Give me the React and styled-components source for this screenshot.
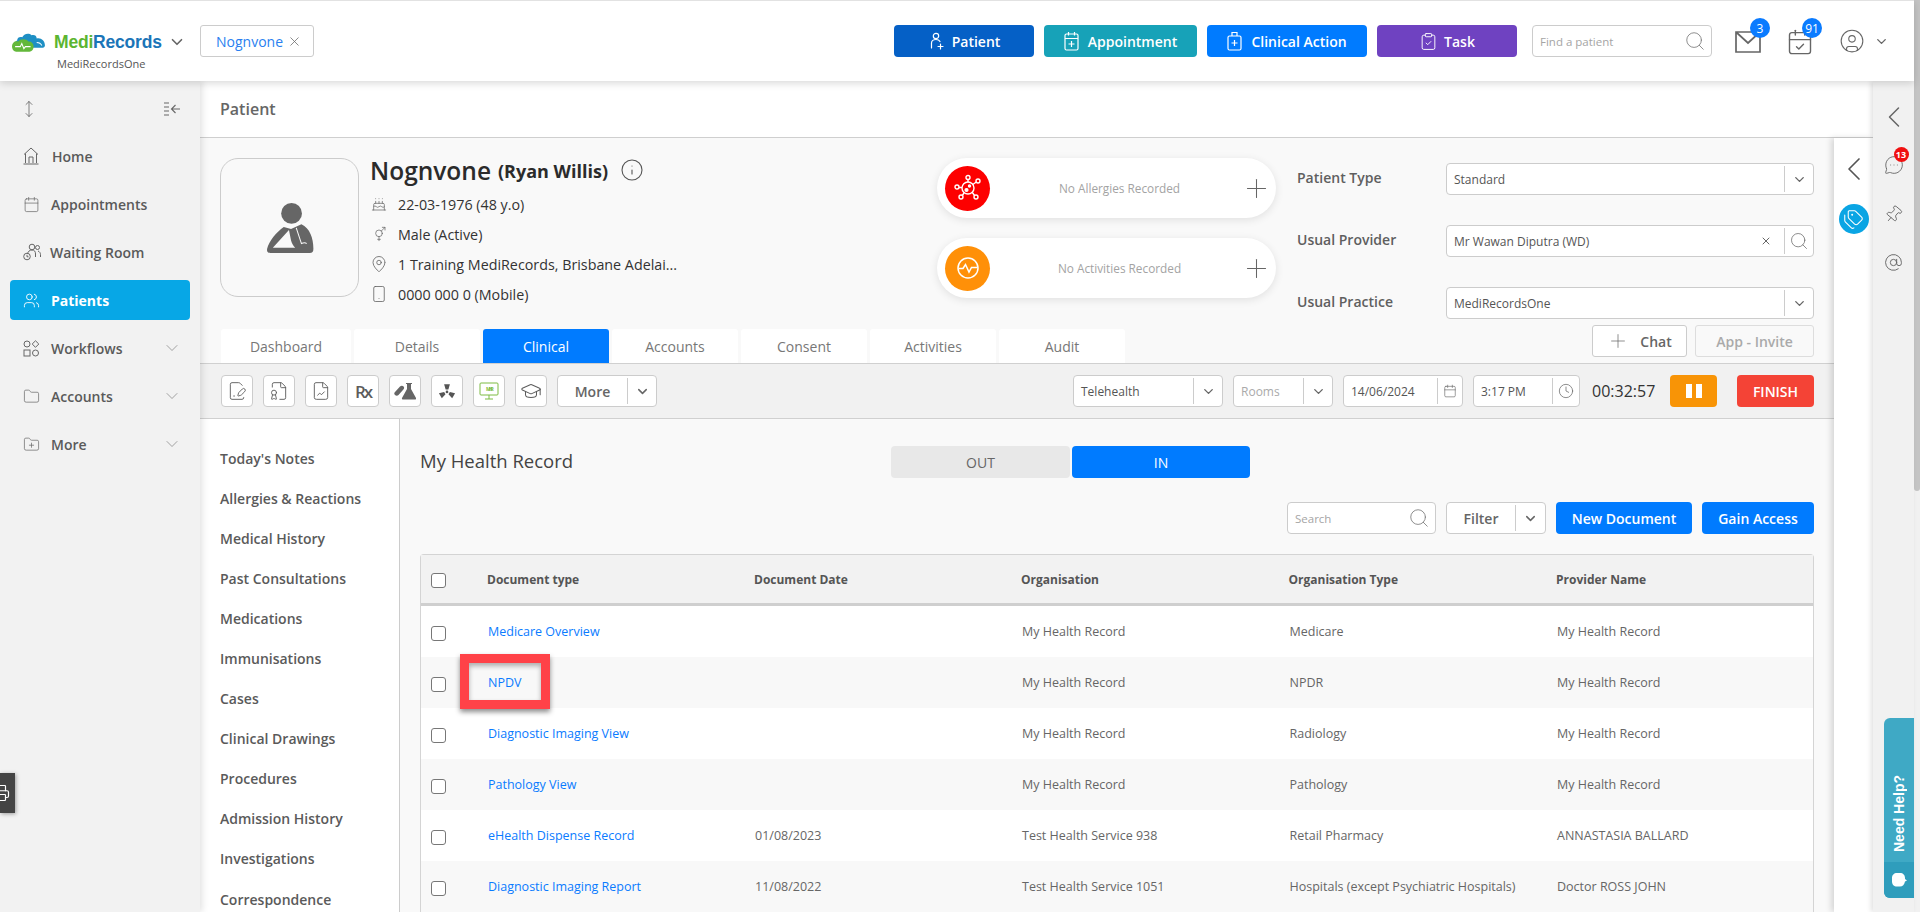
import React from 'react';
import styled, { createGlobalStyle } from 'styled-components';
import {
  ChevronDown, ChevronLeft, Search, X, Plus, Calendar, Clock, Users, Folder, FolderPlus,
  MoveVertical, ClipboardCheck, CalendarCheck, CircleUser, Cake,
  VenusAndMars, MapPin, Smartphone, Info, FilePenLine, FileBadge, FileChartLine,
  GraduationCap, Tags, MessageCircleMore, Pin, AtSign, Printer,
} from 'lucide-react';

const GlobalStyle = createGlobalStyle`
  html, body { margin:0; padding:0; height:100%; overflow:hidden; }
  body { font-family:"Open Sans", "Liberation Sans", sans-serif; color:#555; background:#f2f2f2; }
  * { box-sizing:border-box; }
`;

const Page = styled.div`
  display:flex;
  height:912px;
  width:1920px;
  overflow:hidden;
  position:relative;
`;

const Screen = styled.div`
  width:1914px;
  display:flex;
  flex-direction:column;
  height:100%;
`;

const ScrollTrack = styled.div`
  width:6px;
  background:#f1f1f1;
`;

const ScrollThumb = styled.div`
  height:491px;
  background:#c4c4c4;
  border-radius:0 0 3px 3px;
`;

/* top bar */
const TopBar = styled.header`
  height:81px;
  flex:none;
  background:#fff;
  border-top:1px solid #e2e2e2;
  box-shadow:0 2px 8px rgba(0,0,0,.16);
  display:flex;
  align-items:center;
  position:relative;
  z-index:5;
  padding:0 25px 0 11px;
`;

const Brand = styled.div`
  width:189px;
  flex:none;
  margin-top:19px;
`;

const BrandRow = styled.div`
  display:flex;
  align-items:center;
  height:24px;
  svg.cloud { margin-right:7px; }
`;

const BrandName = styled.span`
  font-family:"Liberation Sans", Arial, sans-serif;
  font-weight:700;
  font-size:17.5px;
  letter-spacing:-.2px;
  color:#1b75b8;
  width:114px;
  b { color:#5cb531; }
`;

const BrandSub = styled.div`
  font-size:11px;
  color:#555;
  padding-left:46px;
  margin-top:3px;
  line-height:14px;
`;

const PatientTag = styled.div`
  width:114px;
  height:32px;
  border:1px solid #ccc;
  border-radius:3px;
  display:flex;
  align-items:center;
  justify-content:space-between;
  padding:0 11px 0 15px;
  font-size:14px;
  color:#2a7ff0;
  svg { color:#666; }
`;

const TopActions = styled.div`
  margin-left:auto;
  display:flex;
  align-items:center;
  gap:10px;
`;

const ActionButton = styled.button`
  height:32px;
  width:${p => p.$w}px;
  border:0;
  border-radius:4px;
  background:${p => p.$bg};
  color:#fff;
  font:600 14px "Open Sans", sans-serif;
  display:flex;
  align-items:center;
  justify-content:center;
  gap:${p => p.$gap || 6}px;
  padding:0;
`;

const SearchBox = styled.div`
  width:${p => p.$w}px;
  height:32px;
  border:1px solid #ccc;
  border-radius:4px;
  background:#fff;
  display:flex;
  align-items:center;
  justify-content:space-between;
  padding:0 5px 0 7px;
  font-size:11.5px;
  color:#a5a5a5;
  margin-left:${p => p.$ml || 0}px;
  svg { color:#777; }
`;

const IconBadge = styled.div`
  position:relative;
  width:26px;
  height:26px;
  color:#666;
  margin-left:${p => p.$ml}px;
  margin-top:4px;
  svg.wide { margin:-2px 0 0 -1px; }
`;

const CountBubble = styled.span`
  position:absolute;
  top:-12px;
  left:15px;
  width:20px;
  height:20px;
  border-radius:50%;
  background:#0a7bff;
  color:#fff;
  font-size:12px;
  font-weight:500;
  display:flex;
  align-items:center;
  justify-content:center;
`;

const UserArea = styled.div`
  display:flex;
  align-items:center;
  gap:9px;
  margin-left:16px;
  color:#666;
`;

/* body */
const Layout = styled.div`
  flex:1;
  display:flex;
  min-height:0;
`;

const Sidebar = styled.aside`
  width:200px;
  flex:none;
  background:#f2f2f2;
  box-shadow:2px 0 7px rgba(0,0,0,.12);
  position:relative;
  z-index:3;
  padding:0 10px;
`;

const SideTools = styled.div`
  height:55px;
  display:flex;
  align-items:center;
  justify-content:space-between;
  color:#666;
  padding:0 9px 0 10px;
`;

const SideItem = styled.div`
  height:40px;
  margin-bottom:8px;
  border-radius:4px;
  display:flex;
  align-items:center;
  gap:${p => p.$gap || 11}px;
  padding:0 8px 0 13px;
  font-size:14px;
  font-weight:${p => (p.$active ? 700 : 600)};
  color:${p => (p.$active ? '#fff' : '#5a5a5a')};
  background:${p => (p.$active ? '#07a7e6' : 'transparent')};
  svg.lead { color:${p => (p.$active ? '#fff' : '#666')}; flex:none; }
  svg.more { margin-left:auto; color:#777; }
`;

const Workspace = styled.div`
  flex:1;
  display:flex;
  flex-direction:column;
  min-width:0;
`;

const PageTitle = styled.div`
  height:57px;
  flex:none;
  background:#fff;
  border-bottom:1px solid #cfcfcf;
  padding:0 20px 1px;
  display:flex;
  align-items:center;
  font-size:16px;
  font-weight:600;
  color:#666;
`;

const WorkRow = styled.div`
  flex:1;
  display:flex;
  min-height:0;
`;

const Content = styled.main`
  flex:1;
  min-width:0;
  display:flex;
  flex-direction:column;
  background:#f9f9f9;
`;

const PatientPanel = styled.section`
  height:225px;
  flex:none;
  display:flex;
  padding:20px 20px 0;
`;

const PatientLeft = styled.div`
  width:1077px;
  flex:none;
  display:flex;
  flex-direction:column;
`;

const PatientTop = styled.div`
  height:140px;
  display:flex;
`;

const Avatar = styled.div`
  width:139px;
  height:139px;
  flex:none;
  border:1px solid #ccc;
  border-radius:18px;
  padding-top:3px;
  display:flex;
  align-items:center;
  justify-content:center;
`;

const Identity = styled.div`
  width:578px;
  flex:none;
  padding-left:11px;
  color:#333;
`;

const NameLine = styled.div`
  height:30px;
  margin:-3px 0 4px;
  display:flex;
  align-items:center;
  font-size:24.5px;
  font-weight:600;
  color:#2b2b2b;
  small {
    font-size:18px;
    font-weight:700;
    margin:2px 0 0 7px;
  }
  svg { margin-left:12px; color:#555; }
`;

const InfoLine = styled.div`
  height:30px;
  display:flex;
  align-items:center;
  font-size:14.3px;
  color:#333;
  svg { color:#666; width:18px; flex:none; margin-right:10px; }
`;

const Pills = styled.div`
  width:339px;
  flex:none;
  display:flex;
  flex-direction:column;
  gap:20px;
`;

const Pill = styled.div`
  height:60px;
  border-radius:30px;
  background:#fff;
  box-shadow:0 2px 8px rgba(0,0,0,.1);
  display:flex;
  align-items:center;
  padding:0 4px 0 8px;
  font-size:11.8px;
  color:#a3a3a3;
  span { flex:1; text-align:center; padding-left:8px; }
  svg.add { color:#666; }
`;

const PillIcon = styled.div`
  width:45px;
  height:45px;
  border-radius:50%;
  background:${p => p.$bg};
  display:flex;
  align-items:center;
  justify-content:center;
`;

const Tabs = styled.nav`
  margin:31px 0 0 1px;
  display:flex;
  gap:3px;
`;

const Tab = styled.div`
  width:${p => p.$w || 126}px;
  height:34px;
  border-radius:3px 3px 0 0;
  background:${p => (p.$active ? '#007bff' : '#fff')};
  color:${p => (p.$active ? '#fff' : '#777')};
  font-size:14px;
  display:flex;
  align-items:center;
  justify-content:center;
`;

const PatientRight = styled.div`
  flex:1;
  padding-top:5px;
`;

const FieldRow = styled.div`
  display:flex;
  align-items:center;
  margin-bottom:30px;
  font-size:14px;
  font-weight:600;
  color:#5f5f5f;
  label { width:149px; margin-top:-3px; }
`;

const InputBox = styled.div`
  flex:${p => (p.$w ? 'none' : 1)};
  width:${p => (p.$w ? `${p.$w}px` : 'auto')};
  height:32px;
  border:1px solid #ccc;
  border-radius:4px;
  background:#fff;
  display:flex;
  align-items:center;
  font-size:${p => p.$fs || 12}px;
  font-weight:${p => p.$fw || 400};
  color:${p => p.$color || '#555'};
  padding-left:${p => (p.$center ? 0 : 7)}px;
  svg { color:#666; }
`;

const BoxText = styled.span`
  flex:1;
  white-space:nowrap;
  text-align:${p => (p.$center ? 'center' : 'left')};
`;

const BoxEnd = styled.div`
  flex:none;
  width:${p => p.$w}px;
  height:26px;
  border-left:1px solid #ccc;
  display:flex;
  align-items:center;
  justify-content:center;
`;

const ClearMark = styled.span`
  display:flex;
  margin-right:12px;
`;

const InviteRow = styled.div`
  margin-top:-24px;
  display:flex;
  justify-content:flex-end;
  gap:8px;
`;

const GhostButton = styled.div`
  width:${p => p.$w}px;
  height:32px;
  border:1px solid ${p => (p.$off ? '#ddd' : '#ccc')};
  border-radius:3px;
  background:${p => (p.$off ? '#f9f9f9' : '#fff')};
  color:${p => (p.$off ? '#aaa' : '#666')};
  font-size:14px;
  font-weight:600;
  display:flex;
  align-items:center;
  justify-content:center;
  gap:11px;
`;

const Toolbar = styled.div`
  height:56px;
  flex:none;
  background:#f1f1f1;
  border-top:1px solid #d0d0d0;
  border-bottom:1px solid #d0d0d0;
  padding:0 20px 0 21px;
  display:flex;
  align-items:center;
`;

const ToolGroup = styled.div`
  display:flex;
  align-items:center;
  gap:10px;
  margin-left:${p => (p.$right ? 'auto' : 0)};
`;

const ToolButton = styled.div`
  width:32px;
  height:32px;
  border:1px solid #ccc;
  border-radius:4px;
  background:#fff;
  color:#5c5c5c;
  font-weight:600;
  font-size:17px;
  letter-spacing:-2px;
  display:flex;
  align-items:center;
  justify-content:center;
`;

const Timer = styled.div`
  width:63px;
  flex:none;
  white-space:nowrap;
  font-size:16px;
  font-weight:500;
  color:#333;
  margin:0 15px 0 12px;
`;

const PauseButton = styled.div`
  width:47px;
  height:32px;
  flex:none;
  border-radius:4px;
  background:#f89406;
  display:flex;
  align-items:center;
  justify-content:center;
  gap:4px;
  i { width:6px; height:14px; background:#fff; }
`;

const FinishButton = styled.div`
  width:77px;
  height:32px;
  flex:none;
  margin-left:20px;
  border-radius:4px;
  background:#f44336;
  color:#fff;
  font-size:14px;
  font-weight:600;
  display:flex;
  align-items:center;
  justify-content:center;
`;

const ClinicalArea = styled.div`
  flex:1;
  min-height:0;
  display:flex;
`;

const ClinicalNav = styled.div`
  width:200px;
  flex:none;
  background:#fff;
  border-right:1px solid #ccc;
  padding:19px 20px 0;
  overflow:hidden;
`;

const ClinicalLink = styled.div`
  height:40.1px;
  display:flex;
  align-items:center;
  font-size:14px;
  font-weight:600;
  color:#5a5a5a;
  white-space:nowrap;
`;

const Record = styled.div`
  flex:1;
  min-width:0;
  padding:27px 20px 0;
  overflow:hidden;
`;

const RecordHead = styled.div`
  height:32px;
  display:flex;
  align-items:center;
  h2 {
    width:471px;
    margin:-4px 0 0;
    font-size:18.5px;
    font-weight:500;
    color:#444;
  }
`;

const SwitchButton = styled.div`
  width:${p => p.$w}px;
  height:32px;
  margin-right:2px;
  border-radius:4px;
  background:${p => (p.$on ? '#007bff' : '#e8e8e8')};
  color:${p => (p.$on ? '#fff' : '#666')};
  font-size:14px;
  font-weight:500;
  display:flex;
  align-items:center;
  justify-content:center;
`;

const RecordTools = styled.div`
  margin-top:24px;
  display:flex;
  justify-content:flex-end;
  gap:10px;
`;

const BlueButton = styled.div`
  width:${p => p.$w}px;
  height:32px;
  border-radius:4px;
  background:#007bff;
  color:#fff;
  font-size:14px;
  font-weight:600;
  display:flex;
  align-items:center;
  justify-content:center;
`;

const Table = styled.div`
  margin-top:20px;
  border:1px solid #d4d4d4;
  border-bottom:0;
  border-radius:4px 4px 0 0;
`;

const Row = styled.div`
  display:grid;
  grid-template-columns:67px 267px 267px 267.5px 267.5px 1fr;
  height:51px;
  background:${p => (p.$head ? '#f2f2f2' : p.$alt ? '#f8f8f8' : '#fff')};
  border-bottom:${p => (p.$head ? '3px solid #cfcfcf' : '0')};
  font-size:${p => (p.$head ? 12 : 12.5)}px;
  font-weight:${p => (p.$head ? 700 : 400)};
  color:${p => (p.$head ? '#555' : '#666')};
`;

const Cell = styled.div`
  display:flex;
  align-items:center;
  position:relative;
  white-space:nowrap;
  margin-left:${p => (p.$shift ? -1 : 0)}px;
`;

const DocLink = styled.span`
  color:#0a7bff;
`;

const Check = styled.span`
  width:15px;
  height:15px;
  margin:3px 0 0 10px;
  border:1px solid #777;
  border-radius:3px;
  background:#fff;
`;

const RedMark = styled.div`
  position:absolute;
  left:-28px;
  top:-3px;
  width:90px;
  height:55px;
  border:9px solid #ff4248;
  box-shadow:0 3px 5px rgba(0,0,0,.45), inset 0 3px 5px rgba(0,0,0,.3);
`;

/* right rails */
const DrawerRail = styled.div`
  width:39px;
  flex:none;
  background:#fff;
  box-shadow:-3px 0 6px rgba(0,0,0,.14);
  position:relative;
  z-index:2;
  display:flex;
  flex-direction:column;
  align-items:center;
  padding-top:11px;
  color:#555;
`;

const TagCircle = styled.div`
  width:30px;
  height:30px;
  margin-top:15px;
  border-radius:50%;
  background:#0aa5e4;
  color:#fff;
  display:flex;
  align-items:center;
  justify-content:center;
`;

const ToolRail = styled.div`
  width:41px;
  flex:none;
  background:#f1f1f1;
  box-shadow:-2px 0 5px rgba(0,0,0,.12);
  position:relative;
  z-index:3;
  display:flex;
  flex-direction:column;
  align-items:center;
  padding-top:18px;
  color:#666;
`;

const RailIcon = styled.div`
  position:relative;
  margin-top:${p => p.$mt}px;
  height:24px;
  svg.tilt { transform:rotate(40deg); }
`;

const RedBadge = styled.span`
  position:absolute;
  top:-8px;
  left:10px;
  width:15px;
  height:15px;
  border-radius:50%;
  background:#f01010;
  color:#fff;
  font-size:9px;
  font-weight:700;
  display:flex;
  align-items:center;
  justify-content:center;
`;

const HelpTab = styled.div`
  position:absolute;
  left:1884px;
  top:718px;
  width:30px;
  height:180px;
  border-radius:6px 0 0 6px;
  overflow:hidden;
  background:#3fa9c5;
  z-index:6;
  color:#fff;
  display:flex;
  flex-direction:column;
`;

const HelpText = styled.div`
  flex:1;
  writing-mode:vertical-rl;
  transform:rotate(180deg);
  font:700 14px "Liberation Sans", Arial, sans-serif;
  display:flex;
  align-items:center;
  padding-top:10px;
`;

const HelpIcon = styled.div`
  height:36px;
  background:#2f9dbc;
  display:flex;
  align-items:center;
  justify-content:center;
`;

const PrintTab = styled.div`
  position:absolute;
  left:0;
  top:773px;
  width:15px;
  height:40px;
  background:#444;
  box-shadow:1px 1px 4px rgba(0,0,0,.35);
  z-index:6;
  overflow:hidden;
  color:#fff;
  display:flex;
  align-items:center;
  svg { margin-left:-8px; flex:none; }
`;

const CloudLogo = () => (
  <svg className="cloud" width="36" height="21" viewBox="0 0 35 20">
    <path d="M6 8c0-3 3-4 5-3 1-3 6-5 9-2 2-1 5 0 5 3 4-1 8 2 8 7 0 1-1 2-2 2H8C3 15 3 9 6 8z" fill="#1e8fc4" />
    <path d="M1 14c0-4 3-6 6-5 2-3 8-3 10 0 3 0 5 2 5 5 0 3-2 5-4 5H5c-2 0-4-2-4-5z" fill="#63b83a" />
    <path d="M4 14h5l1.500-3 2 5 1.500-2h5" fill="none" stroke="#fff" strokeWidth="1" />
    <path d="M25 10c2 0 4 1 5 3" fill="none" stroke="#fff" strokeWidth="1" />
  </svg>
);

const AddPersonIcon = () => (
  <svg width="18" height="18" viewBox="0 0 18 18" fill="none" stroke="#fff" strokeWidth="1.2" strokeLinecap="round">
    <circle cx="8" cy="4" r="2.700" />
    <path d="M3.500 16V11c0-2 2-3.500 4.500-3.500s3.500 1 4 2" />
    <path d="M12.500 12v5M10 14.500h5" />
  </svg>
);

const TallCalendarIcon = () => (
  <svg width="15" height="20" viewBox="0 0 15 20" fill="none" stroke="#fff" strokeWidth="1.200">
    <rect x="1" y="3" width="13" height="16" rx="1.500" />
    <path d="M1 7.500h13M4.500 1v3.500M10.500 1v3.500M7.500 10v6M4.500 13h6" />
  </svg>
);

const MedicalCaseIcon = () => (
  <svg width="15" height="20" viewBox="0 0 15 20" fill="none" stroke="#fff" strokeWidth="1.200">
    <rect x="1" y="5" width="13" height="14" rx="1.500" />
    <path d="M5 5V1.500h5V5M7.500 9v6M4.500 12h6" />
  </svg>
);

const MailIcon = () => (
  <svg width="26" height="24" viewBox="0 0 26 24" fill="none" stroke="#666" strokeWidth="1.700">
    <path d="M1 2h24v20H1zM1 2l12 11L25 2" />
  </svg>
);

const CollapseIcon = () => (
  <svg width="18" height="16" viewBox="0 0 18 16" fill="none" stroke="#666" strokeWidth="1.100">
    <path d="M1 2h5M1 6h5M1 10h5M1 14h5M17 8H9M12.500 4 8.500 8l4 4" />
  </svg>
);

const HomeIcon = () => (
  <svg className="lead" width="16" height="18" viewBox="0 0 16 18" fill="none" stroke="#666" strokeWidth="1">
    <path d="M1 7.500 8 1l7 6.500M2.500 6.500V16M13.500 6.500V16M6 16v-6h4v6M.5 17h15" />
  </svg>
);

const WaitingIcon = () => (
  <svg className="lead" width="18" height="18" viewBox="0 0 18 18" fill="none" stroke="#666" strokeWidth="1">
    <circle cx="9" cy="4" r="2.800" />
    <circle cx="14.500" cy="4.500" r="2" />
    <path d="M4.500 11c.5-2.500 2-4 4.500-4s3.500 1.500 3.500 4v3M15 8c1.500.5 2.500 2 2.500 3.500V14" />
    <circle cx="4" cy="13.500" r="3.300" />
    <path d="M4 11.800v2h1.500" />
  </svg>
);

const WorkflowIcon = () => (
  <svg className="lead" width="17" height="17" viewBox="0 0 17 17" fill="none" stroke="#666" strokeWidth="1">
    <circle cx="4" cy="4" r="3" />
    <path d="M12.500 .8 15.800 4l-3.300 3.300L9.200 4z" />
    <rect x="1" y="10" width="6" height="6" />
    <circle cx="12.500" cy="13" r="3" />
  </svg>
);

const SlingAvatar = () => (
  <svg width="48" height="52" viewBox="0 0 46 50">
    <circle cx="24.500" cy="10" r="10" fill="#666" />
    <path
      fillRule="evenodd"
      fill="#666"
      d="M17 23C10 28 3 36 1 44c-.5 3 1 4 3 4h38c2.500 0 3.500-1 3.500-4 0-10-3.500-20-11.500-23.500L24 25zM22 26 6.500 43H28c-2-2-3-4-4-7z"
    />
    <path d="M29 24l5 15c2-1 4-1 5 0" fill="none" stroke="#f9f9f9" strokeWidth="1" />
  </svg>
);

const MicrobeIcon = () => (
  <svg width="28" height="28" viewBox="0 0 28 28" fill="none" stroke="#fff" strokeWidth="1.400">
    <circle cx="14" cy="14" r="6" />
    <circle cx="14" cy="3.500" r="2" />
    <circle cx="24" cy="7" r="2" />
    <circle cx="3" cy="13" r="2" />
    <circle cx="7" cy="23" r="2" />
    <circle cx="22" cy="23" r="2" />
    <path d="M14 5.500V8M22.300 8l-3.500 2.500M5 13.500h3M8.300 21.500l2-3M20.500 21.500l-2.500-3.500" />
    <circle cx="15.500" cy="12" r="1" fill="#fff" />
    <circle cx="12.500" cy="16" r="1.400" fill="#fff" />
  </svg>
);

const PulseIcon = () => (
  <svg width="24" height="24" viewBox="0 0 24 24" fill="none" stroke="#fff" strokeWidth="1.500">
    <circle cx="12" cy="12" r="10" />
    <path d="M2.500 12.500H7l2.500-4 3.500 7.500 2.500-4.500h6" />
  </svg>
);

const LabIcon = () => (
  <svg width="22" height="18" viewBox="0 0 22 18" fill="#666">
    <path d="M12 1h6v1h-1v5l5 9c.3.8-.2 1.500-1 1.500H9c-.8 0-1.300-.7-1-1.500l5-9V2h-1z" />
    <path d="M1 10 6 4.500c1-1 2.800-1 3.600 0s.7 2.200-.2 3L4.500 13c-1 1-2.500 1-3.500 0s-1-2 0-3z" />
  </svg>
);

const RadiationIcon = () => (
  <svg width="18" height="18" viewBox="0 0 20 20" fill="#555">
    <circle cx="10" cy="11" r="1.500" />
    <path d="M6.800 2.500h6.400L11.500 8.200h-3z" />
    <path d="M6.800 2.500h6.400L11.500 8.200h-3z" transform="rotate(120 10 11)" />
    <path d="M6.800 2.500h6.400L11.500 8.200h-3z" transform="rotate(240 10 11)" />
  </svg>
);

const MhrIcon = () => (
  <svg width="20" height="18" viewBox="0 0 20 18">
    <rect x="1" y="1" width="18" height="12" rx="1" fill="#fff" stroke="#7dbb42" strokeWidth="1" />
    <text x="10" y="9" textAnchor="middle" fontSize="5" fontWeight="700" fill="#7dbb42" fontFamily="Open Sans">MHR</text>
    <path d="M10 13v4M6 17h8" stroke="#7dbb42" strokeWidth="1" />
  </svg>
);

const HelpBubble = () => (
  <svg width="16" height="16" viewBox="0 0 16 16" fill="#fff">
    <path d="M1 6c0-3 2-5 5-5h3c3 0 5 2 5 5v1l2 1.500-2 1c-.5 3-2.500 5-5 5H6c-3 0-5-2-5-5z" />
  </svg>
);

const sideItems = [
  { label: 'Home', icon: <HomeIcon />, gap: 13 },
  { label: 'Appointments', icon: <Calendar className="lead" size={17} strokeWidth={1} /> },
  { label: 'Waiting Room', icon: <WaitingIcon />, gap: 9 },
  { label: 'Patients', icon: <Users className="lead" size={17} strokeWidth={1.3} />, active: true },
  { label: 'Workflows', icon: <WorkflowIcon />, more: true },
  { label: 'Accounts', icon: <Folder className="lead" size={17} strokeWidth={1} />, more: true },
  { label: 'More', icon: <FolderPlus className="lead" size={17} strokeWidth={1} />, more: true },
];

const clinicalLinks = ["Today's Notes", 'Allergies & Reactions', 'Medical History', 'Past Consultations', 'Medications', 'Immunisations', 'Cases', 'Clinical Drawings', 'Procedures', 'Admission History', 'Investigations', 'Correspondence'];

const tabs = ['Dashboard', 'Details', 'Clinical', 'Accounts', 'Consent', 'Activities', 'Audit'];

const documents = [
  ['Medicare Overview', '', 'My Health Record', 'Medicare', 'My Health Record'],
  ['NPDV', '', 'My Health Record', 'NPDR', 'My Health Record'],
  ['Diagnostic Imaging View', '', 'My Health Record', 'Radiology', 'My Health Record'],
  ['Pathology View', '', 'My Health Record', 'Pathology', 'My Health Record'],
  ['eHealth Dispense Record', '01/08/2023', 'Test Health Service 938', 'Retail Pharmacy', 'ANNASTASIA BALLARD'],
  ['Diagnostic Imaging Report', '11/08/2022', 'Test Health Service 1051', 'Hospitals (except Psychiatric Hospitals)', 'Doctor ROSS JOHN'],
];

function App() {
  return (
    <Page>
      <GlobalStyle />
      <Screen>
        <TopBar>
          <Brand>
            <BrandRow>
              <CloudLogo />
              <BrandName><b>Medi</b>Records</BrandName>
              <ChevronDown size={18} color="#666" strokeWidth={2.2} />
            </BrandRow>
            <BrandSub>MediRecordsOne</BrandSub>
          </Brand>
          <PatientTag>Nognvone <X size={15} strokeWidth={1.2} /></PatientTag>
          <TopActions>
            <ActionButton $w={140} $bg="#0560c6"><AddPersonIcon /> Patient</ActionButton>
            <ActionButton $w={153} $bg="#17a2b8" $gap={9}><TallCalendarIcon /> Appointment</ActionButton>
            <ActionButton $w={160} $bg="#007bff" $gap={9}><MedicalCaseIcon /> Clinical Action</ActionButton>
            <ActionButton $w={140} $bg="#6f42c1"><ClipboardCheck size={19} strokeWidth={1.2} /> Task</ActionButton>
            <SearchBox $w={180} $ml={5}>Find a patient <Search size={22} strokeWidth={.9} /></SearchBox>
            <IconBadge $ml={13}><MailIcon /><CountBubble>3</CountBubble></IconBadge>
            <IconBadge $ml={16}><CalendarCheck className="wide" size={28} strokeWidth={1.2} /><CountBubble>91</CountBubble></IconBadge>
            <UserArea>
              <CircleUser size={26} strokeWidth={1} />
              <ChevronDown size={15} strokeWidth={2.2} />
            </UserArea>
          </TopActions>
        </TopBar>
        <Layout>
          <Sidebar>
            <SideTools>
              <MoveVertical size={18} strokeWidth={1.1} />
              <CollapseIcon />
            </SideTools>
            {sideItems.map(item => (
              <SideItem key={item.label} $active={item.active} $gap={item.gap}>
                {item.icon}
                {item.label}
                {item.more && <ChevronDown className="more" size={20} strokeWidth={.8} />}
              </SideItem>
            ))}
          </Sidebar>
          <Workspace>
            <PageTitle>Patient</PageTitle>
            <WorkRow>
              <Content>
                <PatientPanel>
                  <PatientLeft>
                    <PatientTop>
                      <Avatar><SlingAvatar /></Avatar>
                      <Identity>
                        <NameLine>Nognvone <small>(Ryan Willis)</small><Info size={24} strokeWidth={1.1} /></NameLine>
                        <InfoLine><Cake size={16} strokeWidth={1.1} />22-03-1976 (48 y.o)</InfoLine>
                        <InfoLine><VenusAndMars size={16} strokeWidth={1.1} />Male (Active)</InfoLine>
                        <InfoLine><MapPin size={20} strokeWidth={1.1} />1 Training MediRecords, Brisbane Adelai...</InfoLine>
                        <InfoLine><Smartphone size={18} strokeWidth={1.1} />0000 000 0 (Mobile)</InfoLine>
                      </Identity>
                      <Pills>
                        <Pill>
                          <PillIcon $bg="#fd0000"><MicrobeIcon /></PillIcon>
                          <span>No Allergies Recorded</span>
                          <Plus className="add" size={31} strokeWidth={.8} />
                        </Pill>
                        <Pill>
                          <PillIcon $bg="#ff9008"><PulseIcon /></PillIcon>
                          <span>No Activities Recorded</span>
                          <Plus className="add" size={31} strokeWidth={.8} />
                        </Pill>
                      </Pills>
                    </PatientTop>
                    <Tabs>
                      {tabs.map((tab, i) => (
                        <Tab key={tab} $w={i === 0 ? 130 : 126} $active={tab === 'Clinical'}>{tab}</Tab>
                      ))}
                    </Tabs>
                  </PatientLeft>
                  <PatientRight>
                    <FieldRow>
                      <label>Patient Type</label>
                      <InputBox>
                        <BoxText>Standard</BoxText>
                        <BoxEnd $w={29}><ChevronDown size={15} strokeWidth={2.2} /></BoxEnd>
                      </InputBox>
                    </FieldRow>
                    <FieldRow>
                      <label>Usual Provider</label>
                      <InputBox>
                        <BoxText>Mr Wawan Diputra (WD)</BoxText>
                        <ClearMark><X size={12} strokeWidth={2} /></ClearMark>
                        <BoxEnd $w={29}><Search size={20} strokeWidth={.9} /></BoxEnd>
                      </InputBox>
                    </FieldRow>
                    <FieldRow>
                      <label>Usual Practice</label>
                      <InputBox>
                        <BoxText>MediRecordsOne</BoxText>
                        <BoxEnd $w={29}><ChevronDown size={15} strokeWidth={2.2} /></BoxEnd>
                      </InputBox>
                    </FieldRow>
                    <InviteRow>
                      <GhostButton $w={95}><Plus size={22} strokeWidth={.8} /> Chat</GhostButton>
                      <GhostButton $w={119} $off>App - Invite</GhostButton>
                    </InviteRow>
                  </PatientRight>
                </PatientPanel>
                <Toolbar>
                  <ToolGroup>
                    <ToolButton><FilePenLine size={20} strokeWidth={1.1} /></ToolButton>
                    <ToolButton><FileBadge size={20} strokeWidth={1.1} /></ToolButton>
                    <ToolButton><FileChartLine size={20} strokeWidth={1.1} /></ToolButton>
                    <ToolButton>Rx</ToolButton>
                    <ToolButton><LabIcon /></ToolButton>
                    <ToolButton><RadiationIcon /></ToolButton>
                    <ToolButton><MhrIcon /></ToolButton>
                    <ToolButton><GraduationCap size={22} strokeWidth={1.1} /></ToolButton>
                    <InputBox $w={100} $fs={14} $fw={600} $color="#666" $center>
                      <BoxText $center>More</BoxText>
                      <BoxEnd $w={29}><ChevronDown size={15} strokeWidth={2.4} /></BoxEnd>
                    </InputBox>
                  </ToolGroup>
                  <ToolGroup $right>
                    <InputBox $w={150}>
                      <BoxText>Telehealth</BoxText>
                      <BoxEnd $w={29}><ChevronDown size={15} strokeWidth={2.2} /></BoxEnd>
                    </InputBox>
                    <InputBox $w={100} $color="#aaa">
                      <BoxText>Rooms</BoxText>
                      <BoxEnd $w={29}><ChevronDown size={15} strokeWidth={2.2} /></BoxEnd>
                    </InputBox>
                    <InputBox $w={120}>
                      <BoxText>14/06/2024</BoxText>
                      <BoxEnd $w={25}><Calendar size={14} strokeWidth={1.1} /></BoxEnd>
                    </InputBox>
                    <InputBox $w={107}>
                      <BoxText>3:17 PM</BoxText>
                      <BoxEnd $w={27}><Clock size={16} strokeWidth={1.1} /></BoxEnd>
                    </InputBox>
                  </ToolGroup>
                  <Timer>00:32:57</Timer>
                  <PauseButton><i /><i /></PauseButton>
                  <FinishButton>FINISH</FinishButton>
                </Toolbar>
                <ClinicalArea>
                  <ClinicalNav>
                    {clinicalLinks.map(link => <ClinicalLink key={link}>{link}</ClinicalLink>)}
                  </ClinicalNav>
                  <Record>
                    <RecordHead>
                      <h2>My Health Record</h2>
                      <SwitchButton $w={179}>OUT</SwitchButton>
                      <SwitchButton $w={178} $on>IN</SwitchButton>
                    </RecordHead>
                    <RecordTools>
                      <SearchBox $w={149}>Search <Search size={22} strokeWidth={.9} /></SearchBox>
                      <InputBox $w={100} $fs={14} $fw={600} $color="#666" $center>
                        <BoxText $center>Filter</BoxText>
                        <BoxEnd $w={30}><ChevronDown size={15} strokeWidth={2.4} /></BoxEnd>
                      </InputBox>
                      <BlueButton $w={136}>New Document</BlueButton>
                      <BlueButton $w={112}>Gain Access</BlueButton>
                    </RecordTools>
                    <Table>
                      <Row $head>
                        <Cell><Check /></Cell>
                        <Cell $shift>Document type</Cell>
                        <Cell $shift>Document Date</Cell>
                        <Cell $shift>Organisation</Cell>
                        <Cell $shift>Organisation Type</Cell>
                        <Cell $shift>Provider Name</Cell>
                      </Row>
                      {documents.map((doc, i) => (
                        <Row key={doc[0]} $alt={i % 2 === 1}>
                          <Cell><Check /></Cell>
                          <Cell>
                            <DocLink>{doc[0]}</DocLink>
                            {doc[0] === 'NPDV' && <RedMark />}
                          </Cell>
                          <Cell>{doc[1]}</Cell>
                          <Cell>{doc[2]}</Cell>
                          <Cell>{doc[3]}</Cell>
                          <Cell>{doc[4]}</Cell>
                        </Row>
                      ))}
                    </Table>
                  </Record>
                </ClinicalArea>
              </Content>
              <DrawerRail>
                <ChevronLeft size={40} strokeWidth={1} />
                <TagCircle><Tags size={21} strokeWidth={1.2} /></TagCircle>
              </DrawerRail>
            </WorkRow>
          </Workspace>
          <ToolRail>
            <ChevronLeft size={36} strokeWidth={1} />
            <RailIcon $mt={20}>
              <MessageCircleMore size={20} strokeWidth={1.1} />
              <RedBadge>13</RedBadge>
            </RailIcon>
            <RailIcon $mt={26}><Pin className="tilt" size={19} strokeWidth={1.1} /></RailIcon>
            <RailIcon $mt={24}><AtSign size={19} strokeWidth={1.2} /></RailIcon>
          </ToolRail>
        </Layout>
      </Screen>
      <ScrollTrack><ScrollThumb /></ScrollTrack>
      <HelpTab>
        <HelpText>Need Help?</HelpText>
        <HelpIcon><HelpBubble /></HelpIcon>
      </HelpTab>
      <PrintTab><Printer size={18} strokeWidth={1.6} /></PrintTab>
    </Page>
  );
}

export default App;
